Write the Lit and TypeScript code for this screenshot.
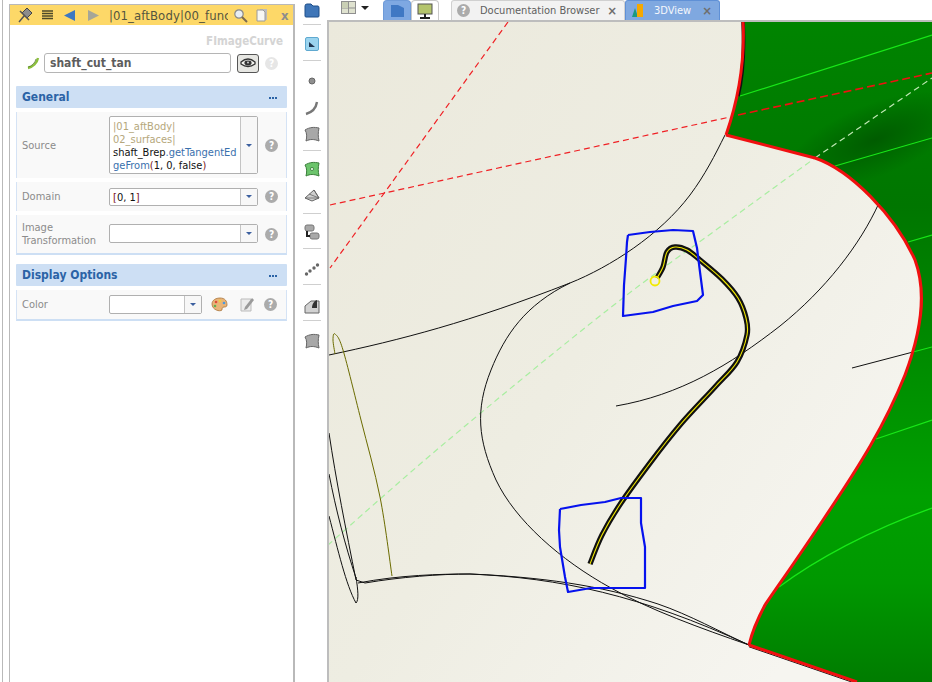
import { LitElement, css, html, svg } from 'lit';
import { customElement } from 'lit/decorators.js';

type Pt = [number, number];

// catmull-rom through the traced points, only for the thick curve and short bits
function smooth(p: Pt[]): string {
  let d = `M${p[0][0]} ${p[0][1]}`;
  for (let i = 0; i < p.length - 1; i++) {
    const a = p[Math.max(i - 1, 0)];
    const b = p[i];
    const c = p[i + 1];
    const e = p[Math.min(i + 2, p.length - 1)];
    const c1x = b[0] + (c[0] - a[0]) / 6;
    const c1y = b[1] + (c[1] - a[1]) / 6;
    const c2x = c[0] - (e[0] - b[0]) / 6;
    const c2y = c[1] - (e[1] - b[1]) / 6;
    d += ` C${c1x.toFixed(1)} ${c1y.toFixed(1)} ${c2x.toFixed(1)} ${c2y.toFixed(1)} ${c[0]} ${c[1]}`;
  }
  return d;
}

const line = (p: Pt[]) => 'M' + p.map((q) => q.join(' ')).join('L');

const edgeTop = 'M743 21C745 60 740 95 726 135';
const edgeBigTail =
  'L815 158C850 170 895 215 915 260C928 295 920 335 905 375C885 425 860 465 825 517C800 555 775 590 765 605C757 620 752 632 749 645';
const greenArea = `${edgeTop} ${edgeBigTail} L857 682 L932 682 L932 20 L743 20 Z`;

const thickCurve: Pt[] = [
  [590, 564], [602, 535], [621, 503], [650, 463], [680, 425], [715, 387], [737, 362], [747, 335],
  [746, 318], [738, 298], [722, 279], [700, 260], [687, 250], [675, 247], [667, 252], [663, 267], [657, 278],
];
const blueTop: Pt[] = [
  [628, 235], [650, 232], [673, 230], [693, 231], [697, 248], [700, 272], [703, 295], [697, 301], [673, 306],
  [653, 312], [623, 316], [624, 285], [626, 258], [627, 242], [628, 235],
];
const blueBottom: Pt[] = [
  [560, 509], [581, 505], [605, 502], [621, 498], [641, 498], [641, 523], [645, 547], [645, 588], [611, 588],
  [591, 588], [568, 592], [565, 577], [560, 547], [559, 530], [560, 509],
];

const blackPaths = [
  'M329 355C400 340 470 322 570 283C610 267 660 235 690 195C705 175 715 155 725 135',
  'M570 283C525 305 505 335 491 370C475 410 478 440 496 480C515 520 560 560 611 588C650 610 700 628 749 645',
  'M616 406C680 395 730 365 780 326C825 290 860 245 879 203',
  'M852 368L913 352',
  'M358 583C400 575 440 574 470 574C560 578 640 595 749 645',
  'M365 583C400 577 440 574 470 574C540 577 600 585 658 604C690 615 720 632 749 645',
  'M329 433C336 480 346 530 356 580',
  'M329 474C336 510 345 545 356 578',
  'M329 516C338 550 346 585 356 603C359 600 358 590 356 577',
  'M356 580L365 583',
];

const viewport = svg`
  <svg class="scene" viewBox="329 22 603 660" preserveAspectRatio="none">
    <defs>
      <linearGradient id="grn" gradientUnits="userSpaceOnUse" x1="0" y1="20" x2="0" y2="682">
        <stop offset="0" stop-color="#008400"></stop>
        <stop offset="0.28" stop-color="#007600"></stop>
        <stop offset="0.72" stop-color="#00a000"></stop>
        <stop offset="0.85" stop-color="#009800"></stop>
        <stop offset="1" stop-color="#007c00"></stop>
      </linearGradient>
      <radialGradient id="shade" gradientUnits="userSpaceOnUse" cx="0" cy="0" r="1"
        gradientTransform="translate(875 140) rotate(-22) scale(95 36)">
        <stop offset="0" stop-color="#005a00" stop-opacity="0.95"></stop>
        <stop offset="1" stop-color="#005a00" stop-opacity="0"></stop>
      </radialGradient>
    </defs>
    <path d=${greenArea} fill="url(#grn)"></path>
    <path d=${greenArea} fill="url(#shade)"></path>

    <g fill="none" stroke="#18e818" stroke-width="1.200">
      <path d="M740 96L932 35"></path>
      <path d="M835 166L932 138"></path>
      <path d="M908 242L932 235"></path>
      <path d="M913 352L932 347"></path>
      <path d="M876 439L932 420"></path>
      <path d="M779 587C815 560 870 530 932 508"></path>
    </g>

    <g fill="none" stroke="#f02024" stroke-width="1.200" stroke-dasharray="6 4">
      <path d="M330 205L730 117"></path>
      <path d="M508 22L330 268"></path>
    </g>
    <path d="M738 115L932 73" fill="none" stroke="#f01010" stroke-width="1.600" stroke-dasharray="8 4"></path>
    <path d=${smooth([[328, 545], [446, 442], [610, 308], [720, 227], [815, 158]])}
      fill="none" stroke="#a8eea0" stroke-width="1.200" stroke-dasharray="6 4"></path>
    <path d="M815 158L932 78" fill="none" stroke="#bfe8b4" stroke-width="1.200" stroke-dasharray="6 4"></path>

    <g fill="none" stroke="#111" stroke-width="1">
      ${blackPaths.map((d) => svg`<path d=${d}></path>`)}
    </g>
    <path d=${smooth([[335, 354], [333, 340], [335, 334], [343, 350], [361, 420], [380, 497], [392, 576]])}
      fill="none" stroke="#6b6b00" stroke-width="1"></path>

    <path d="M743 21C745 60 742 80 738 96" fill="none" stroke="#111" stroke-width="3.600"></path>
    <path d="M749 645L857 682" fill="none" stroke="#111" stroke-width="1" transform="translate(0 1.800)"></path>
    <g fill="none" stroke="#f01010" stroke-width="3">
      <path d=${edgeTop}></path>
      <path d=${'M726 135' + edgeBigTail}></path>
      <path d="M749 645L857 682"></path>
    </g>

    <path d=${smooth(thickCurve)} fill="none" stroke="#111" stroke-width="5.400"></path>
    <path d=${smooth(thickCurve)} fill="none" stroke="#f2ea00" stroke-width="1.100"></path>
    <circle cx="655" cy="281" r="4.500" fill="none" stroke="#f2ea00" stroke-width="1.800"></circle>

    <g fill="none" stroke="#0612ee" stroke-width="2.200" stroke-linejoin="round">
      <path d=${line(blueTop)}></path>
      <path d=${line(blueBottom)}></path>
    </g>
  </svg>
`;

const help = (faded = false) => html`<span class="help ${faded ? 'faded' : ''}">?</span>`;

const surface = svg`<path d="M1 4C6 1 10 1 15 2C14 7 14 10 15 15C10 13 6 13 2 15C3 11 3 7 1 4Z" fill="#a8a8a8" stroke="#666"></path>`;

const toolIcons = [
  svg`<circle cx="8" cy="8" r="3" fill="#8f8f8f" stroke="#666"></circle>`,
  svg`<path d="M2 14C9 12 12 8 13 2" fill="none" stroke="#777" stroke-width="2.400"></path>`,
  surface,
  svg`<path d="M1 4C6 1 10 1 15 2C14 7 14 10 15 15C10 13 6 13 2 15C3 11 3 7 1 4Z" fill="#6cc46c" stroke="#3a7d3a"></path><circle cx="8" cy="8" r="1.600" fill="#dff5df" stroke="#2f6f2f" stroke-width=".7"></circle>`,
  svg`<path d="M1 11L10 3L15 11L8 14Z" fill="#cfcfcf" stroke="#666"></path><path d="M1 11L15 11M5 7L15 11M10 3L15 11" stroke="#666" fill="none" stroke-width=".8"></path>`,
  svg`<rect x="1" y="1" width="9" height="6" rx="2" fill="#a8a8a8" stroke="#777"></rect><rect x="6" y="9" width="9" height="6" rx="2" fill="#a8a8a8" stroke="#777"></rect><path d="M3 7V12H6" fill="none" stroke="#222" stroke-width="2"></path>`,
  svg`<g fill="#666"><circle cx="2.500" cy="13" r="1.700"></circle><circle cx="6" cy="10" r="1.700"></circle><circle cx="10" cy="7" r="1.700"></circle><circle cx="13.500" cy="4" r="1.700"></circle></g>`,
  svg`<path d="M1 15V8L7 3H15V15Z" fill="#d2d2d2" stroke="#666"></path><path d="M8 10C8 6 10 3 13 2L13 10Z" fill="#333"></path>`,
  surface,
];

@customElement('app-root')
export class AppRoot extends LitElement {
  static styles = css`
    :host {
      display: flex;
      width: 932px;
      height: 682px;
      overflow: hidden;
      background: #fff;
      font-family: 'DejaVu Sans', 'Liberation Sans', sans-serif;
      font-stretch: condensed;
      font-size: 11px;
      color: #555;
    }

    .strip {
      width: 2px;
      margin-right: 6px;
      border-right: 1px solid #b9b9b9;
      flex: none;
    }

    /* left properties panel */
    .panel {
      width: 283px;
      flex: none;
      margin-top: 4px;
      border-style: solid;
      border-color: #b9b9b9;
      border-width: 1px 2px 0 1px;
    }

    .title {
      height: 20px;
      background: #fdd868;
      display: flex;
      align-items: center;
      padding-left: 6px;
      color: #5a5a4a;
    }

    .title svg {
      flex: none;
    }

    .path {
      width: 119px;
      margin-left: 10px;
      margin-right: 5px;
      overflow: hidden;
      white-space: nowrap;
      font-size: 13px;
      letter-spacing: 0.1px;
      color: #55553f;
    }

    .close {
      margin-left: 12px;
      font-weight: bold;
      color: #8d8d8d;
      font-size: 13px;
    }

    .classname {
      text-align: right;
      font-weight: bold;
      color: #d4d4d4;
      font-size: 11.500px;
      height: 14px;
      line-height: 14px;
      margin-top: 9px;
      padding-right: 10px;
    }

    .name {
      display: flex;
      align-items: center;
      height: 20px;
      margin-top: 5px;
      padding-left: 16px;
    }

    .name svg {
      flex: none;
    }

    .nameinput {
      box-sizing: border-box;
      width: 187px;
      height: 20px;
      margin-left: 4px;
      border: 1px solid #b5b5b5;
      border-radius: 3px;
      padding-left: 5px;
      line-height: 18px;
      font-weight: bold;
      font-size: 12px;
      color: #5d5d5d;
    }

    .eye {
      box-sizing: border-box;
      width: 22px;
      height: 19px;
      margin-left: 6px;
      border: 1px solid #555;
      border-radius: 3px;
      background: #e6e6e2;
      display: flex;
      align-items: center;
      justify-content: center;
    }

    .name .help {
      margin-left: 6px;
    }

    .section {
      margin: 0 6px;
    }

    .head {
      height: 22px;
      background: #cddff4;
      display: flex;
      align-items: center;
      justify-content: space-between;
      padding: 0 10px 0 6px;
      font-weight: bold;
      font-size: 12px;
      color: #2b63a6;
      border-radius: 1px;
    }

    .dots {
      display: flex;
      gap: 1px;
      margin-top: 2px;
    }

    .dots i {
      width: 2px;
      height: 2px;
      background: #2b63a6;
    }

    .general {
      margin-top: 13px;
    }

    .options {
      margin-top: 9px;
    }

    .rows {
      display: flex;
      flex-direction: column;
      gap: 4px;
      padding-top: 4px;
    }

    .row {
      display: flex;
      align-items: center;
      background: #f9f9f9;
      border-left: 1px solid #d5e3f5;
      border-right: 1px solid #d5e3f5;
      padding-left: 5px;
      color: #8b8b8b;
      line-height: 13px;
    }

    .row:last-child {
      border-bottom: 2px solid #cddff4;
    }

    .row .label {
      width: 87px;
      flex: none;
    }

    .combo {
      box-sizing: border-box;
      width: 149px;
      flex: none;
      display: flex;
      align-items: stretch;
      background: #fff;
      border: 1px solid #b0b0b0;
      border-radius: 2px;
      color: #111;
    }

    .combo.short {
      width: 93px;
    }

    .combo .text {
      flex: 1;
      min-width: 0;
      padding: 3px 0 3px 3px;
      white-space: nowrap;
      overflow: hidden;
    }

    .combo .arrow {
      width: 16px;
      flex: none;
      border-left: 1px solid #c4c4c4;
      background: #f7f7f7;
      display: flex;
      align-items: center;
      justify-content: center;
    }

    .arrow i {
      width: 0;
      height: 0;
      border-left: 3px solid transparent;
      border-right: 3px solid transparent;
      border-top: 3px solid #3b5f9f;
    }

    .tan {
      color: #b5a77c;
    }

    .fn {
      color: #3a70ad;
    }

    .par {
      color: #7a1420;
    }

    .help {
      display: inline-flex;
      width: 13px;
      height: 13px;
      flex: none;
      border-radius: 50%;
      background: #ababab;
      color: #fff;
      font-weight: bold;
      font-size: 10px;
      line-height: 13px;
      align-items: center;
      justify-content: center;
    }

    .help.faded {
      background: #e6e6e6;
    }

    .row .help {
      margin-left: 7px;
    }

    .row svg {
      flex: none;
      margin-left: 9px;
    }

    .row svg + svg {
      margin-left: 12px;
    }

    .row svg + .help {
      margin-left: 9px;
    }

    /* vertical toolbar */
    .tools {
      width: 33px;
      flex: none;
      display: flex;
      flex-direction: column;
      align-items: center;
    }

    .tools .sep {
      width: 18px;
      height: 1px;
      background: #cfcfcf;
      flex: none;
    }

    .tools svg {
      display: block;
      flex: none;
    }

    /* right part */
    .main {
      flex: 1;
      min-width: 0;
      display: flex;
      flex-direction: column;
    }

    .tabs {
      height: 20px;
      flex: none;
      display: flex;
      align-items: stretch;
    }

    .layout {
      width: 55px;
      flex: none;
      display: flex;
      align-items: center;
      padding: 0 0 5px 13px;
      box-sizing: border-box;
      gap: 5px;
    }

    .caret {
      width: 0;
      height: 0;
      border-left: 4px solid transparent;
      border-right: 4px solid transparent;
      border-top: 4px solid #222;
    }

    .switch {
      width: 28px;
      flex: none;
      box-sizing: border-box;
      border: 1px solid #c9c9c9;
      border-bottom: none;
      border-radius: 4px 4px 0 0;
      display: flex;
      align-items: center;
      justify-content: center;
    }

    .switch.on {
      background: #7ea8e2;
      border-color: #6f9bd8;
    }

    .gap {
      width: 12px;
      flex: none;
    }

    .tab {
      box-sizing: border-box;
      display: flex;
      align-items: center;
      border: 1px solid #d0d0d0;
      border-bottom: none;
      border-radius: 3px 3px 0 0;
      background: #f2f2f2;
      color: #5f5f5f;
      flex: none;
    }

    .tab.docs {
      width: 174px;
      padding-left: 5px;
    }

    .tab.docs .help {
      margin-right: 10px;
    }

    .tab.view {
      width: 95px;
      background: #7fa8e0;
      border-color: #5f90d6;
      color: #f4f7fc;
      padding-left: 6px;
    }

    .tab.view svg {
      margin-right: 11px;
    }

    .tab .x {
      margin-left: auto;
      margin-right: 7px;
      font-weight: bold;
      font-size: 13px;
      color: #6e6e6e;
      line-height: 14px;
    }

    .viewport {
      flex: 1;
      min-height: 0;
      box-sizing: border-box;
      border-top: 2px solid #bdbdbd;
      border-left: 2px solid #bdbdbd;
      margin-left: -1px;
      background: linear-gradient(125deg, #ebe9dc 0%, #eeede2 45%, #f6f5f0 85%);
    }

    .scene {
      display: block;
      width: 100%;
      height: 100%;
    }
  `;

  private tool(icon: unknown, top: number) {
    return html`<svg style="margin-top:${top}px" width="16" height="16" viewBox="0 0 16 16">${icon}</svg>`;
  }

  private sep(top: number) {
    return html`<div class="sep" style="margin-top:${top}px"></div>`;
  }

  private renderTools() {
    return html`<div class="tools">
      <svg style="margin-top:3px" width="16" height="15" viewBox="0 0 16 15">
        <path d="M1 3Q1 1 3 1H7L9 3H14Q15 3 15 5V13Q15 14 14 14H2Q1 14 1 13Z" fill="#3f76b8" stroke="#1f4f8a"></path>
      </svg>
      ${this.sep(6)}
      <svg style="margin-top:12px" width="14" height="14" viewBox="0 0 14 14">
        <rect x=".5" y=".5" width="13" height="13" rx="1.500" fill="#9bd4ef" stroke="#5fa9d0"></rect>
        <path d="M4 5L10 10H4Z" fill="#1f3550"></path>
      </svg>
      ${this.sep(9)}
      ${this.tool(toolIcons[0], 12)} ${this.tool(toolIcons[1], 11)} ${this.tool(toolIcons[2], 10)}
      ${this.sep(8)}
      ${this.tool(toolIcons[3], 10)} ${this.tool(toolIcons[4], 10)}
      ${this.sep(10)}
      ${this.tool(toolIcons[5], 10)}
      ${this.sep(8)}
      ${this.tool(toolIcons[6], 12)}
      ${this.sep(7)}
      ${this.tool(toolIcons[7], 13)}
      ${this.sep(6)}
      ${this.tool(toolIcons[8], 12)}
    </div>`;
  }

  render() {
    const dots = html`<span class="dots"><i></i><i></i><i></i></span>`;
    return html`
      <div class="strip"></div>
      <section class="panel">
        <div class="title">
          <svg width="18" height="18" viewBox="0 0 18 18">
            <path d="M6 7L11 2L16 7L11 12Z" fill="#8c8c8c" stroke="#444" stroke-width="1"></path>
            <path d="M8 10L3 16M4 5L13 14" stroke="#555" stroke-width="1.500" fill="none"></path>
          </svg>
          <svg style="margin-left:8px" width="12" height="10" viewBox="0 0 12 10">
            <path d="M0 1H11M0 3.500H11M0 6H11M0 8.500H11" stroke="#4d4a2a" stroke-width="1.500"></path>
          </svg>
          <svg style="margin-left:10px" width="12" height="13" viewBox="0 0 12 13">
            <path d="M11 1V12L0 6.500Z" fill="#3c78c2"></path>
          </svg>
          <svg style="margin-left:11px" width="12" height="13" viewBox="0 0 12 13">
            <path d="M1 1V12L12 6.500Z" fill="#a6a698"></path>
          </svg>
          <span class="path">|01_aftBody|00_func</span>
          <svg width="15" height="15" viewBox="0 0 15 15">
            <circle cx="6" cy="6" r="4.200" fill="#e8eef4" stroke="#8a8a8a" stroke-width="1.200"></circle>
            <path d="M9 9L14 14" stroke="#7a6a50" stroke-width="2"></path>
          </svg>
          <svg style="margin-left:8px" width="13" height="15" viewBox="0 0 13 15">
            <path d="M4 1H11V12H4Z" fill="#bcbcbc"></path>
            <path d="M1 2H7L9 4V13H1Z" fill="#f7f7f2" stroke="#9a9a9a"></path>
          </svg>
          <span class="close">x</span>
        </div>
        <div class="classname">FImageCurve</div>
        <div class="name">
          <svg width="14" height="14" viewBox="0 0 14 14">
            <path d="M2 12C7 11 11 7 12 2" fill="none" stroke="#8cbf3c" stroke-width="2.400"></path>
            <path d="M2 11C6 10 9 7 10 3" fill="none" stroke="#3f6b16" stroke-width=".7"></path>
          </svg>
          <div class="nameinput">shaft_cut_tan</div>
          <div class="eye">
            <svg width="16" height="10" viewBox="0 0 16 10">
              <path d="M1 4Q8 -2 15 4V6Q8 11 1 6Z" fill="#f2f2ee" stroke="#333" stroke-width="1.300"></path>
              <ellipse cx="8" cy="5" rx="3.600" ry="2.400" fill="#333"></ellipse>
              <circle cx="8" cy="4.500" r=".9" fill="#ddd"></circle>
            </svg>
          </div>
          ${help(true)}
        </div>

        <div class="section general">
          <div class="head"><span>General</span>${dots}</div>
          <div class="rows">
            <div class="row" style="height:66px">
              <div class="label">Source</div>
              <div class="combo" style="height:58px">
                <div class="text">
                  <span class="tan">|01_aftBody|</span><br />
                  <span class="tan">02_surfaces|</span><br />
                  shaft_Brep<span class="fn">.getTangentEd</span><br />
                  <span class="fn">geFrom</span><span class="par">(</span>1, 0, false<span class="par">)</span>
                </div>
                <div class="arrow"><i></i></div>
              </div>
              ${help()}
            </div>
            <div class="row" style="height:29px">
              <div class="label">Domain</div>
              <div class="combo" style="height:18px">
                <div class="text" style="padding-top:2px"><span class="par">[</span>0, 1<span class="par">]</span></div>
                <div class="arrow"><i></i></div>
              </div>
              ${help()}
            </div>
            <div class="row" style="height:38px">
              <div class="label">Image<br />Transformation</div>
              <div class="combo" style="height:19px;margin-top:-1px">
                <div class="text"></div>
                <div class="arrow"><i></i></div>
              </div>
              ${help()}
            </div>
          </div>
        </div>

        <div class="section options">
          <div class="head"><span>Display Options</span>${dots}</div>
          <div class="rows">
            <div class="row" style="height:29px">
              <div class="label">Color</div>
              <div class="combo short" style="height:19px">
                <div class="text"></div>
                <div class="arrow"><i></i></div>
              </div>
              <svg width="17" height="15" viewBox="0 0 17 15">
                <path d="M1 7C1 3 5 1 9 1C14 1 16 4 16 8C16 10 14 10 13 10C11 10 11 12 11 13C9 15 1 13 1 7Z" fill="#e9b478" stroke="#a8743a" stroke-width=".8"></path>
                <circle cx="5" cy="5" r="1.300" fill="#e04a3a"></circle>
                <circle cx="9" cy="4" r="1.300" fill="#f0d040"></circle>
                <circle cx="13" cy="6" r="1.300" fill="#4a9ae0"></circle>
                <circle cx="4" cy="9" r="1.300" fill="#60b050"></circle>
              </svg>
              <svg width="15" height="15" viewBox="0 0 15 15">
                <path d="M1 2H11V14H1Z" fill="#ececec" stroke="#bbb"></path>
                <path d="M5 10L12 1L14 3L7 12L4 13Z" fill="#9a9a9a"></path>
              </svg>
              ${help()}
            </div>
          </div>
        </div>
      </section>

      ${this.renderTools()}

      <div class="main">
        <div class="tabs">
          <div class="layout">
            <svg width="15" height="13" viewBox="0 0 15 13">
              <rect x=".5" y=".5" width="14" height="12" fill="#dfe2cf" stroke="#8f8f8f"></rect>
              <path d="M.5 7H14.500M7.500 .5V12.500" stroke="#8f8f8f"></path>
              <rect x="1" y="1" width="6" height="6" fill="#c9cfb4"></rect>
            </svg>
            <i class="caret"></i>
          </div>
          <div class="switch on">
            <svg width="15" height="14" viewBox="0 0 15 14"><path d="M1 1H8L14 4V13H1Z" fill="#3f78c4"></path></svg>
          </div>
          <div class="switch">
            <svg width="16" height="16" viewBox="0 0 16 16">
              <rect x="1" y="1" width="14" height="10" fill="#b4c46c" stroke="#555"></rect>
              <path d="M8 11V14M3 15H13" stroke="#222" stroke-width="2"></path>
            </svg>
          </div>
          <div class="gap"></div>
          <div class="tab docs">${help()}<span>Documentation Browser</span><span class="x">×</span></div>
          <div class="tab view">
            <svg width="11" height="14" viewBox="0 0 11 14">
              <path d="M0 13L3 4L6 13Z" fill="#1a9a80"></path>
              <rect x="5" y="0" width="6" height="13" fill="#f5a800"></rect>
            </svg>
            <span>3DView</span><span class="x">×</span>
          </div>
        </div>
        <div class="viewport">${viewport}</div>
      </div>
    `;
  }
}

declare global {
  interface HTMLElementTagNameMap {
    'app-root': AppRoot;
  }
}
